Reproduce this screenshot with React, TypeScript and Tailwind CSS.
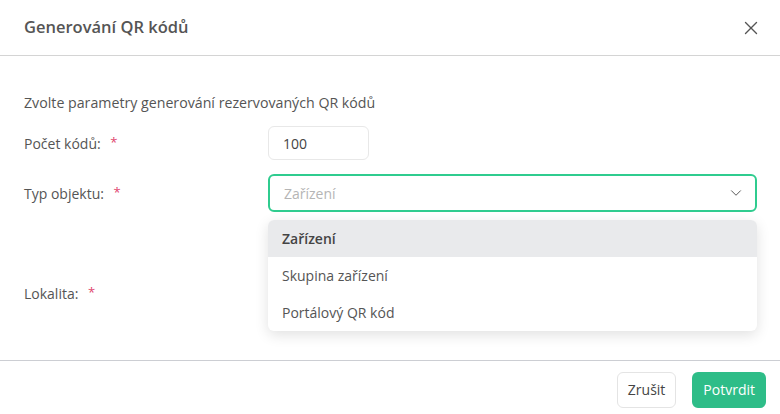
import { X, ChevronDown } from 'lucide-react'

const font = { fontFamily: '"Open Sans", "Noto Sans", sans-serif' }

function Label({ text }: { text: string }) {
  return (
    <div className="w-[244px] shrink-0 text-[14px] text-[#555]">
      {text} <span className="ml-[6px] text-[13px] align-top text-[#e0466e]">*</span>
    </div>
  )
}

export default function App() {
  const options = ['Zařízení', 'Skupina zařízení', 'Portálový QR kód']

  return (
    <div className="w-[780px] h-[414px] bg-white flex flex-col overflow-hidden" style={font}>
      <div className="h-[56px] shrink-0 flex items-center justify-between pl-6 pr-[18px] border-b border-[#d4d4d4]">
        <h1 className="text-[16.5px] font-semibold text-[#555]">Generování QR kódů</h1>
        <X className="w-[22px] h-[22px] text-[#555]" strokeWidth={1.5} />
      </div>

      <div className="flex-1 pl-6 pr-[23px] pt-[37px] text-[#555]">
        <p className="text-[14.2px] leading-[20px]">Zvolte parametry generování rezervovaných QR kódů</p>

        <div className="flex items-center mt-[13px]">
          <Label text="Počet kódů:" />
          <div className="w-[101px] h-[34px] border border-[#e8e8e8] rounded-md flex items-center px-[14px] text-[14px] text-[#444]">
            100
          </div>
        </div>

        <div className="relative flex items-center mt-[14px]">
          <Label text="Typ objektu:" />
          <div className="flex-1 h-[38px] border-2 border-[#2fcc8f] rounded-md flex items-center justify-between pl-[14px] pr-[10px]">
            <span className="text-[14px] text-[#b5b5b5]">Zařízení</span>
            <ChevronDown className="w-[18px] h-[18px] text-[#555]" strokeWidth={1.3} />
          </div>

          <div className="absolute left-[244px] right-0 top-[46px] z-10 bg-white rounded-md shadow-[0_4px_14px_rgba(0,0,0,0.12)] overflow-hidden">
            {options.map((o, i) => (
              <div
                key={o}
                className={
                  'h-[37px] px-[14px] flex items-center text-[14px] ' +
                  (i === 0 ? 'bg-[#e9eaec] font-semibold text-[#444]' : 'text-[#555]')
                }
              >
                {o}
              </div>
            ))}
          </div>
        </div>

        <div className="flex items-center mt-[63px] h-[36px]">
          <Label text="Lokalita:" />
          <div className="flex-1 h-[36px] border border-[#e8e8e8] rounded-md" />
        </div>
      </div>

      <div className="h-[54px] shrink-0 border-t border-[#ccced3] flex items-center justify-end gap-4 pr-[14px] pt-1">
        <button className="h-[36px] px-[10px] rounded-md border border-[#e4e4e4] bg-white text-[14px] text-[#444]">
          Zrušit
        </button>
        <button className="h-[36px] px-[11px] rounded-md bg-[#2ebd88] text-[14px] text-white">
          Potvrdit
        </button>
      </div>
    </div>
  )
}
